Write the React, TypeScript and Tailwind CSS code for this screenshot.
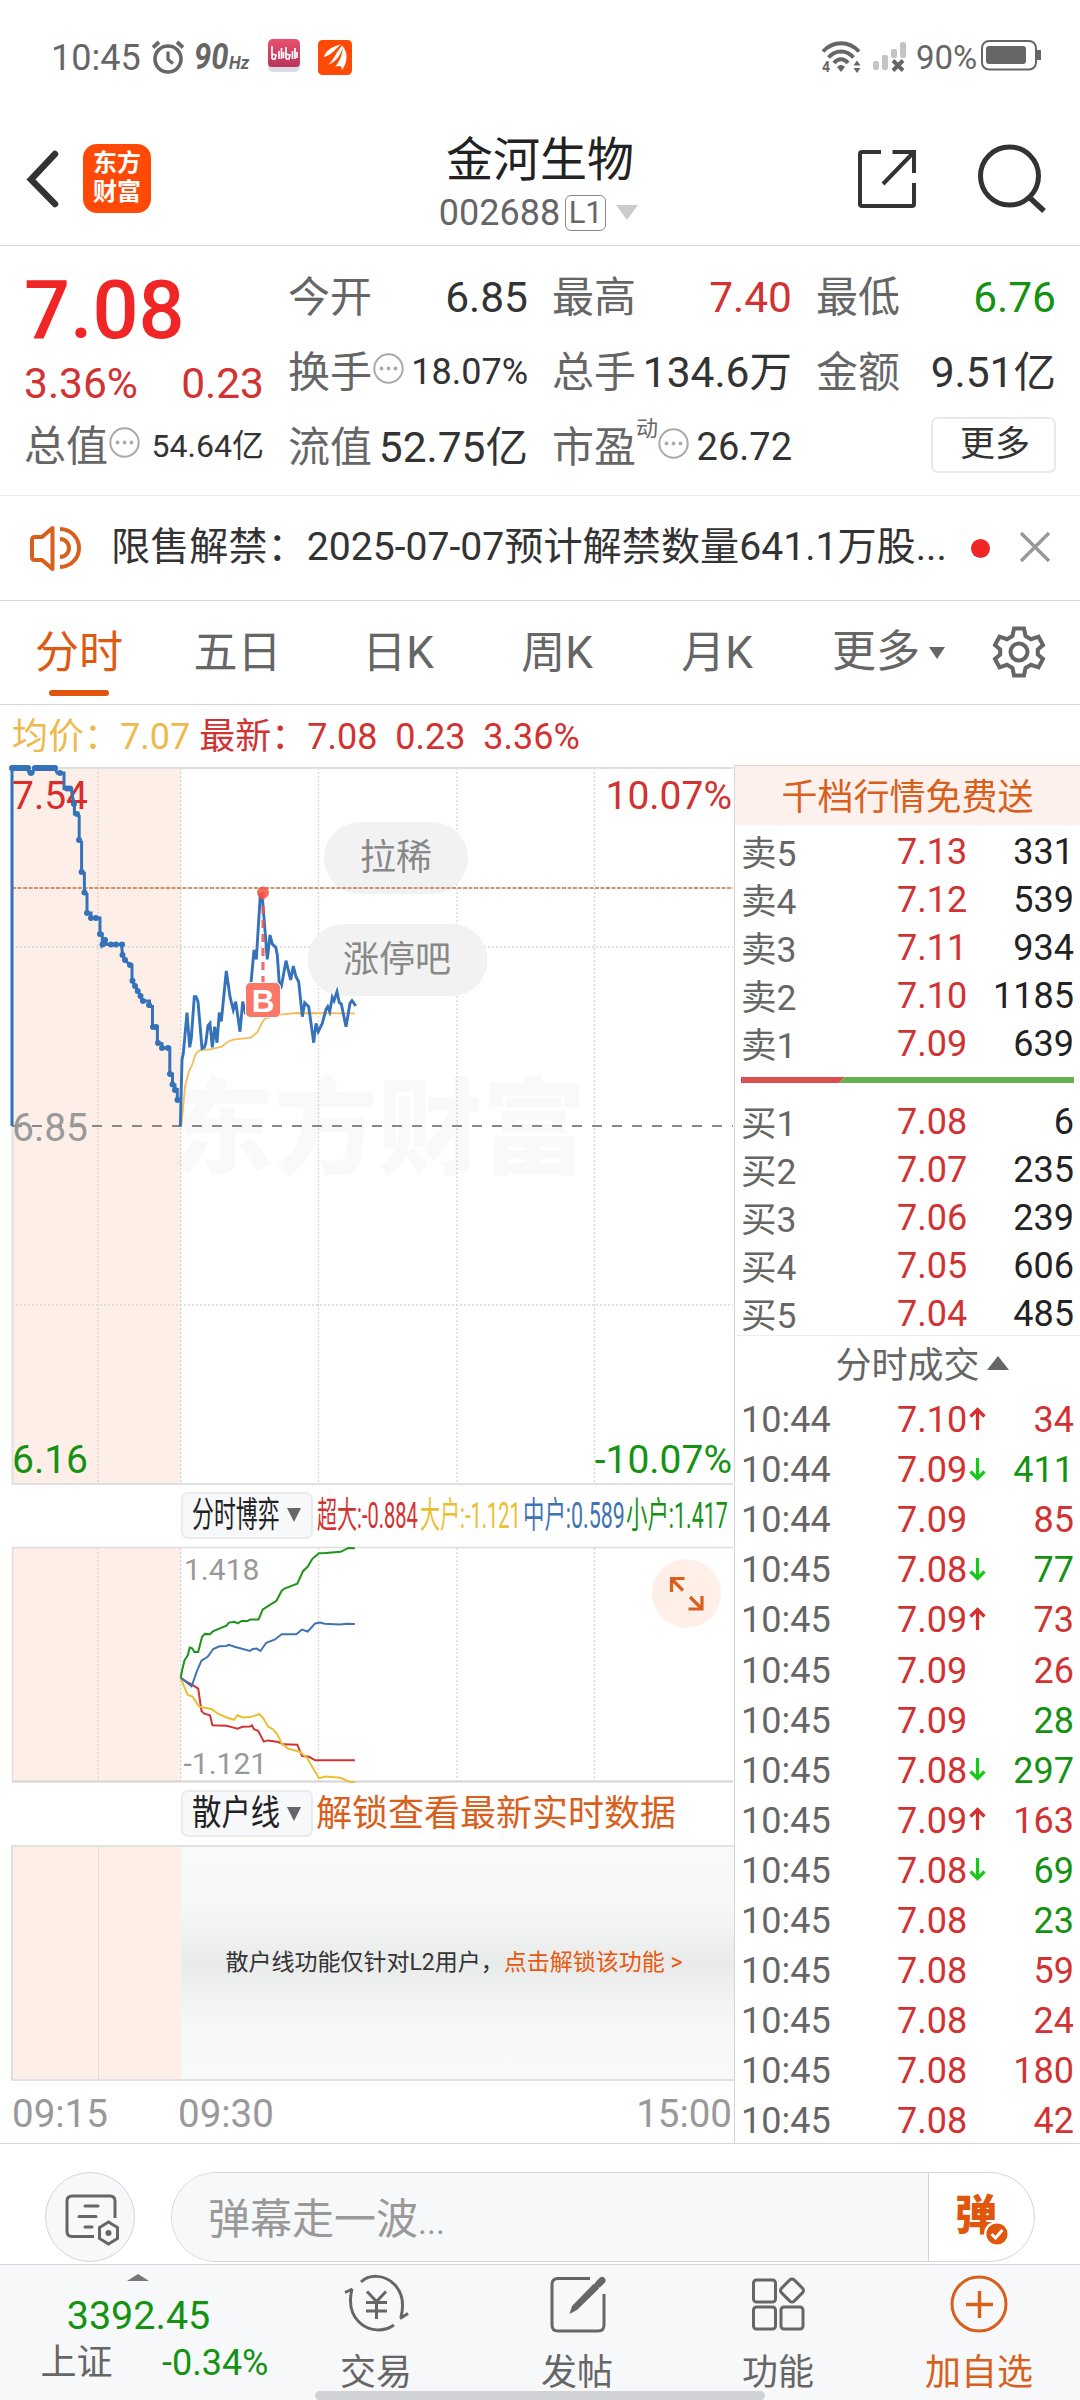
import type { ReactNode } from 'react';

type Pt = [number, number];

const toPoints = (pts: Pt[], sx: number, sy: number, ox: number, oy: number) =>
  pts.map(([x, y]) => `${(x * sx + ox).toFixed(1)},${(y * sy + oy).toFixed(1)}`).join(' ');

const PRE_OPEN: Pt[] = [
  [12, 1126], [12, 768], [27.5, 768], [29, 773], [33, 773], [34, 768], [55, 768], [57, 773], [64, 773], [64, 788.6],
  [71.6, 788.6], [72, 795], [74.4, 804], [74.4, 814], [76.8, 814], [79.2, 816], [79.2, 840], [81.6, 842], [81.6, 871.8],
  [84.4, 873], [84.4, 892.5], [87, 894], [87, 913], [91, 913], [91, 918], [100, 918], [100, 934], [102.3, 934],
  [102.3, 944.6], [105.4, 940], [106.7, 944.6], [121.5, 944.6], [122.6, 955], [125, 960], [130, 965], [132, 965],
  [132, 980.7], [135, 985.7], [137.7, 990.7], [140.5, 996], [142, 1001], [149.5, 1001], [149.5, 1006.4],
  [152.5, 1006.4], [152.5, 1027], [157.4, 1027], [157.4, 1043], [162, 1043.5], [162, 1048], [169.8, 1048],
  [169.8, 1074], [172.5, 1074], [172.5, 1084.6], [175, 1085], [175, 1089.6], [177.3, 1089.6], [177.3, 1100], [180, 1100],
];

const PRE_DOTS: Pt[] = [
  [31, 773], [60, 773], [67, 788.6], [70, 788.6], [74, 804], [77, 814], [79, 840], [81.6, 872], [84.4, 892.5], [87, 913], [91, 918],
  [96, 918], [100, 934], [102.5, 944.6], [105, 940], [111, 944.6], [116, 944.6], [122, 944.6], [122.5, 955], [125, 960], [130, 965],
  [132.5, 980.7], [135, 986], [137.7, 991], [140.5, 996], [143, 1001], [149, 1005], [153, 1027], [156, 1027], [158, 1043], [162, 1048],
  [168, 1048], [170, 1074], [172.5, 1084.6], [175, 1090], [177.5, 1100],
];

const PRICE: Pt[] = [
  [31, 800], [36, 600], [40, 580], [51, 458], [59, 562], [64, 535], [73, 410], [78, 410], [84, 425], [96, 565], [103, 562],
  [107, 550], [114, 497], [120, 490], [127, 562], [134, 500], [141, 548], [148, 458], [154, 484], [169, 333], [180, 410],
  [190, 450], [197, 425], [210, 515], [218, 425], [226, 458], [232, 455], [242, 380], [252, 270], [259, 298], [271, 105],
  [277, 110], [292, 298], [300, 225], [307, 252], [317, 262], [322, 285], [329, 388], [334, 380], [348, 302], [362, 360],
  [370, 318], [378, 350], [386, 365], [397, 470], [404, 428], [416, 440], [431, 548], [438, 490], [445, 515], [457, 490],
  [468, 448], [473, 440], [479, 455], [487, 412], [492, 422], [501, 395], [508, 428], [514, 432], [528, 500], [540, 430],
  [546, 422], [552, 430], [557, 438],
];

const AVERAGE: Pt[] = [
  [33, 800], [36, 780], [45, 680], [55, 640], [66, 615], [78, 580], [90, 571], [120, 568], [155, 560], [172, 546], [190, 539],
  [243, 533], [263, 515], [276, 488], [285, 476], [330, 464], [380, 459], [555, 460],
];

const SMALL: Pt[] = [
  [383, 380], [386, 360], [391, 335], [398, 322], [402, 302], [407, 304], [412, 314], [420, 314], [428, 275], [434, 267],
  [445, 268], [452, 260], [480, 246], [485, 238], [497, 236], [504, 240], [512, 234], [525, 234], [530, 230], [548, 230],
  [557, 204], [568, 196], [586, 182], [597, 156], [604, 150], [630, 138], [642, 106], [652, 94], [662, 74], [676, 60],
  [690, 59], [722, 56], [738, 46], [752, 47],
];
const MEDIUM: Pt[] = [
  [383, 380], [406, 402], [418, 360], [427, 336], [440, 326], [452, 306], [465, 299], [480, 298], [485, 295], [497, 300],
  [530, 311], [535, 306], [544, 305], [552, 311], [564, 290], [582, 282], [597, 268], [628, 268], [640, 256], [652, 261],
  [668, 240], [678, 238], [688, 241], [720, 243], [735, 241], [752, 242],
];
const HUGE: Pt[] = [
  [383, 380], [395, 390], [408, 398], [420, 408], [427, 465], [433, 472], [445, 476], [450, 502], [480, 503], [495, 508],
  [503, 511], [514, 506], [530, 505], [534, 502], [538, 512], [547, 516], [559, 544], [568, 541], [590, 545], [600, 551],
  [630, 552], [640, 581], [655, 583], [668, 592], [752, 592],
];
const LARGE: Pt[] = [
  [383, 380], [390, 402], [398, 424], [408, 428], [422, 454], [448, 460], [462, 472], [480, 482], [496, 488], [503, 476],
  [515, 482], [530, 481], [540, 477], [550, 473], [558, 484], [568, 505], [578, 512], [588, 526], [597, 549], [610, 562],
  [635, 570], [650, 585], [676, 638], [690, 634], [722, 637], [740, 647], [752, 648],
];

const SELLS = [['卖5', '7.13', '331'], ['卖4', '7.12', '539'], ['卖3', '7.11', '934'], ['卖2', '7.10', '1185'], ['卖1', '7.09', '639']];
const BUYS = [['买1', '7.08', '6'], ['买2', '7.07', '235'], ['买3', '7.06', '239'], ['买4', '7.05', '606'], ['买5', '7.04', '485']];

type Tick = { t: string; p: string; dir: '' | 'up' | 'down'; v: string; buy: boolean };
const TICKS: Tick[] = [
  { t: '10:44', p: '7.10', dir: 'up', v: '34', buy: true },
  { t: '10:44', p: '7.09', dir: 'down', v: '411', buy: false },
  { t: '10:44', p: '7.09', dir: '', v: '85', buy: true },
  { t: '10:45', p: '7.08', dir: 'down', v: '77', buy: false },
  { t: '10:45', p: '7.09', dir: 'up', v: '73', buy: true },
  { t: '10:45', p: '7.09', dir: '', v: '26', buy: true },
  { t: '10:45', p: '7.09', dir: '', v: '28', buy: false },
  { t: '10:45', p: '7.08', dir: 'down', v: '297', buy: false },
  { t: '10:45', p: '7.09', dir: 'up', v: '163', buy: true },
  { t: '10:45', p: '7.08', dir: 'down', v: '69', buy: false },
  { t: '10:45', p: '7.08', dir: '', v: '23', buy: false },
  { t: '10:45', p: '7.08', dir: '', v: '59', buy: true },
  { t: '10:45', p: '7.08', dir: '', v: '24', buy: true },
  { t: '10:45', p: '7.08', dir: '', v: '180', buy: true },
  { t: '10:45', p: '7.08', dir: '', v: '42', buy: true },
];

function StatusBar() {
  return (
    <div className="flex h-[114px] items-center pl-[51px] text-[#666]">
      <span className="w-[100px] pt-px text-[36px] leading-none">10:45</span>
      <svg className="h-[34px] w-[34px]" viewBox="0 0 34 34" fill="none" stroke="#666">
        <circle cx="17" cy="19" r="13" strokeWidth="3.6" />
        <path d="M17 11.5v8l5 4" strokeWidth="3.2" />
        <path d="M2 7.5l6-5.5M32 7.5l-6-5.5" strokeWidth="3.8" />
      </svg>
      <span className="ml-[9px] w-[74px] whitespace-nowrap font-bold italic leading-none">
        <span className="inline-block w-[35px] origin-left scale-x-[0.86] text-[36px]">90</span>
        <span className="inline-block origin-left scale-x-90 text-[19px]">Hz</span>
      </span>
      <div className="mt-[-3px] flex h-[33px] w-[32px] flex-col overflow-hidden rounded-[5px] bg-[#d9dbe8]">
        <div className="flex h-[28px] items-center justify-center rounded-b-[4px] bg-gradient-to-b from-[#ea5070] to-[#b8345a]">
          <svg className="h-4 w-7" viewBox="0 0 28 16" fill="none" stroke="#fff" strokeWidth="1.7">
            <path d="M2 1v13M2 9l4 1-1 4-3 0M9 6v8M11.500 3v11M13.500 7v6M16 2v12M16 9l4 1-1 4-3 0M22.500 6v8M25 3v11M27 7v6" />
          </svg>
        </div>
      </div>
      <svg className="ml-[18px] h-[35px] w-[34px]" viewBox="0 0 34 35">
        <rect width="34" height="35" rx="4.500" fill="#fe4a06" />
        <path d="M6 17C7 11 15 6 23 4.500C17 9 14 15 6 17zM10 25C16 20 18 12 24.500 5C25 13 18 22 10 25zM17 27C22 21 25 14 24.500 6C30 12 30 22 24 30C24 26 22 25 17 27z" fill="#fff" />
      </svg>
      <svg className="ml-[468px] h-[36px] w-[42px]" viewBox="0 0 42 36">
        <g fill="none" stroke="#666" strokeWidth="4">
          <path d="M3 12.500C13 1.500 29 1.500 39 12.500" />
          <path d="M8.500 18.500C15.500 10.500 26.500 10.500 33.500 18.500" />
          <path d="M14 24C18 19 24 19 28 24" />
        </g>
        <path d="M17 28q4-4 8 0l-4 5z" fill="#666" />
        <path d="M33.500 26.500h7l-3.500-5zM33.500 29h7l-3.500 5z" fill="#666" />
        <text x="2" y="32.500" fontSize="14" fontWeight="700" fill="#666" fontFamily="Roboto">4</text>
      </svg>
      <svg className="ml-[10px] h-[32px] w-[34px]" viewBox="0 0 34 32">
        <g fill="#c4c4c4">
          <rect x="1" y="20" width="6" height="9" rx="2" />
          <rect x="10" y="14" width="6" height="15" rx="2" />
          <rect x="19" y="8" width="6" height="9" rx="2" />
          <rect x="28" y="1" width="6" height="16" rx="2" />
        </g>
        <path d="M21 19.500l10 10M31 19.500l-10 10" stroke="#666" strokeWidth="4" />
      </svg>
      <span className="ml-[10px] w-[64px] whitespace-nowrap text-[33px] leading-none">90%</span>
      <svg className="ml-px mt-[-3px] h-[31px] w-[60px]" viewBox="0 0 60 31">
        <rect x="1" y="1" width="54" height="28.500" rx="7" fill="none" stroke="#666" strokeWidth="2" />
        <rect x="5" y="6" width="40" height="18" rx="3" fill="#666" />
        <path d="M56 10h4v10h-4z" fill="#666" />
      </svg>
    </div>
  );
}

function Header() {
  return (
    <div className="flex h-[132px] items-center border-b border-[#d4d5d9]">
      <svg className="ml-[26px] mt-[-2px] h-[58px] w-[34px]" viewBox="0 0 34 58">
        <path d="M29 4L5 29.500L29 54" fill="none" stroke="#333" strokeWidth="6.500" strokeLinecap="round" />
      </svg>
      <div className="ml-[23px] mt-[-3px] flex h-[69px] w-[68px] flex-col items-center justify-center rounded-[14px] bg-[#fe4a06] text-[24px] font-bold leading-[29px] text-white">
        <span>东方</span>
        <span>财富</span>
      </div>
      <div className="ml-[265px] mt-[10px] flex w-[248px] flex-col items-center">
        <div className="text-[47px] leading-[56px] text-[#222]">金河生物</div>
        <div className="ml-[-3px] flex h-[50px] items-center">
          <span className="text-[36px] leading-none text-[#666]">002688</span>
          <span className="ml-[5px] flex h-[36px] w-[41px] items-center justify-center rounded-[6px] border border-[#888] text-[31px] leading-none text-[#666]">L1</span>
          <span className="ml-[10px] h-0 w-0 border-x-[11px] border-t-[15px] border-x-transparent border-t-[#ccc]" />
        </div>
      </div>
      <svg className="ml-[192px] mt-[-4px] h-[60px] w-[60px]" viewBox="0 0 60 60" fill="none" stroke="#333" strokeWidth="4">
        <path d="M25 4H6Q4 4 4 6V56Q4 58 6 58H56Q58 58 58 56V35" />
        <path d="M36.500 4H58V25M57 5L27 36" />
      </svg>
      <svg className="ml-[59px] mt-[-4px] h-[72px] w-[72px]" viewBox="0 0 72 72" fill="none" stroke="#333">
        <circle cx="34.500" cy="34" r="29" strokeWidth="5" />
        <path d="M54 55L69 69" strokeWidth="5.500" />
      </svg>
    </div>
  );
}

function InfoDots() {
  return (
    <svg className="h-[31px] w-[31px] shrink-0" viewBox="0 0 31 31">
      <circle cx="15.500" cy="15.500" r="14.200" fill="none" stroke="#aaa" strokeWidth="2" />
      <g fill="#aaa">
        <circle cx="8.500" cy="15.500" r="1.900" />
        <circle cx="15.500" cy="15.500" r="1.900" />
        <circle cx="22.500" cy="15.500" r="1.900" />
      </g>
    </svg>
  );
}

function Stat({ label, value, valueClass, extra }: { label: string; value: string; valueClass: string; extra?: ReactNode }) {
  return (
    <div className="flex h-[75px] items-center whitespace-nowrap text-[42px] leading-[75px] text-[#666]">
      <span>{label}</span>
      {extra}
      <span className={`ml-auto ${valueClass}`}>{value}</span>
    </div>
  );
}

function Quote() {
  return (
    <div className="grid h-[250px] grid-cols-4 gap-6 border-b border-[#ececec] px-6 pt-[14px]">
      <div>
        <div className="h-[98px] pt-px text-[81px] font-medium leading-[99px] text-[#f02626]">7.08</div>
        <div className="flex h-[51px] items-center justify-between text-[42.5px] leading-[51px] text-[#d13232]">
          <span>3.36%</span>
          <span>0.23</span>
        </div>
        <Stat label="总值" value="54.64亿" valueClass="text-[32px] text-[#333]" extra={<span className="mb-2 ml-px"><InfoDots /></span>} />
      </div>
      <div>
        <Stat label="今开" value="6.85" valueClass="text-[#333] text-[42.5px]" />
        <Stat label="换手" value="18.07%" valueClass="text-[36px] text-[#333]" extra={<span className="mb-2 ml-px"><InfoDots /></span>} />
        <Stat label="流值" value="52.75亿" valueClass="text-[#333] text-[42.5px]" />
      </div>
      <div>
        <Stat label="最高" value="7.40" valueClass="text-[#d13232] text-[42.5px]" />
        <Stat label="总手" value="134.6万" valueClass="text-[#333] text-[42.5px]" />
        <Stat
          label="市盈"
          value="26.72"
          valueClass="text-[38px] text-[#333]"
          extra={
            <>
              <span className="mb-[38px] text-[22px] leading-none">动</span>
              <span className="mb-2"><InfoDots /></span>
            </>
          }
        />
      </div>
      <div>
        <Stat label="最低" value="6.76" valueClass="text-[#159212] text-[42.5px]" />
        <Stat label="金额" value="9.51亿" valueClass="text-[#333] text-[42.5px]" />
        <div className="ml-auto mt-[7px] flex h-[56px] w-[125px] items-center justify-center rounded-[7px] border-2 border-[#e9e9e9] pb-px pl-[3px] text-[35px] leading-none text-[#333]">更多</div>
      </div>
    </div>
  );
}

function Notice() {
  return (
    <div className="flex h-[105px] items-center border-b border-[#d4d5d9]">
      <svg className="ml-[28px] h-[48px] w-[54px]" viewBox="0 0 54 48" fill="none" stroke="#d8601c" strokeWidth="4">
        <path d="M24.500 4V45L14 36H7Q4 36 4 33V16Q4 13 7 13H14Z" strokeLinejoin="round" />
        <path d="M32 5A19 19 0 0 1 32 43M32 15A9 9 0 0 1 32 33" />
      </svg>
      <span className="ml-[29px] w-[850px] whitespace-nowrap text-[39.15px] leading-none text-[#333]">限售解禁：2025-07-07预计解禁数量641.1万股...</span>
      <span className="ml-[10px] h-[19px] w-[19px] rounded-full bg-[#f02626]" />
      <svg className="ml-[29px] mt-[-2px] h-[32px] w-[32px]" viewBox="0 0 32 32">
        <path d="M2 2L30 30M30 2L2 30" stroke="#999" strokeWidth="3.500" />
      </svg>
    </div>
  );
}

function Tabs() {
  return (
    <div className="flex h-[104px] border-b border-[#d4d5d9] text-[44px] leading-[105px] text-[#666]">
      <div className="flex w-[158px] flex-col items-center text-[#dd5a12]">
        <span className="h-[89px]">分时</span>
        <span className="h-[6px] w-[60px] rounded-full bg-[#e0560c]" />
      </div>
      <div className="w-[159px] text-center">五日</div>
      <div className="w-[162px] text-center">日K</div>
      <div className="w-[156px] text-center">周K</div>
      <div className="w-[164px] text-center">月K</div>
      <div className="ml-[33px] flex items-center">
        <span>更多</span>
        <span className="ml-[9px] h-0 w-0 border-x-[8px] border-t-[12px] border-x-transparent border-t-[#666]" />
      </div>
      <svg className="ml-[47px] mt-[24px] h-[54px] w-[54px]" viewBox="0 0 54 54" fill="none" stroke="#666" strokeWidth="4" strokeLinejoin="miter">
        <path d="M22 3.500H32L33.500 11L39 14.200L46.500 11.700L51 20L45.800 24.500V29.500L51 34L46.500 42.300L39 39.800L33.500 43L32 50.500H22L20.500 43L15 39.800L7.500 42.300L3 34L8.200 29.500V24.500L3 20L7.500 11.700L15 14.200L20.500 11Z" />
        <circle cx="27" cy="27" r="8.500" />
      </svg>
    </div>
  );
}

const GRID_X = [98, 318.5, 457, 594.5];

function PriceChart() {
  return (
    <svg className="block h-[722px] w-[734px]" viewBox="0 765 734 722" fontFamily="Roboto, 'Noto Sans CJK SC', sans-serif">
      <rect x="12" y="768" width="169" height="716" fill="#fdeee8" />
      <g stroke="#d6d6d6" strokeWidth="1.300" strokeDasharray="2 2">
        {GRID_X.map((x) => <line key={x} x1={x} x2={x} y1="768" y2="1484" />)}
        <line x1="180.700" x2="180.700" y1="768" y2="1484" />
        <line x1="12" x2="733" y1="947" y2="947" />
        <line x1="12" x2="733" y1="1305" y2="1305" />
      </g>
      <path d="M12 768H733M12 1484H733M12.500 768V1484" stroke="#e0e0e0" strokeWidth="2" fill="none" />
      <text x="170" y="1166" fontSize="104" fontWeight="900" fill="#000" fillOpacity="0.025">东方财富</text>
      <rect x="324" y="822" width="144" height="72" rx="36" fill="#f2f2f2" />
      <rect x="307.500" y="924" width="180" height="72" rx="36" fill="#f2f2f2" />
      <line x1="12" x2="733" y1="888" y2="888" stroke="#c4703f" strokeWidth="1.300" strokeDasharray="4 1.500" />
      <line x1="12" x2="733" y1="1126" y2="1126" stroke="#888" strokeWidth="2" strokeDasharray="10 10" />
      <text x="396" y="869.500" fontSize="36" fill="#888" textAnchor="middle">拉稀</text>
      <text x="397" y="972" fontSize="36" fill="#888" textAnchor="middle">涨停吧</text>
      <polyline points={toPoints(AVERAGE, 1 / 3, 1 / 3, 170, 860)} fill="none" stroke="#f3bc55" strokeWidth="1.800" />
      <g fontSize="39">
        <text x="12" y="809" fill="#d92c2c">7.54</text>
        <text x="732" y="809" fill="#d13232" textAnchor="end">10.07%</text>
        <text x="12" y="1141" fill="#999">6.85</text>
        <text x="12" y="1473" fill="#159212">6.16</text>
        <text x="732" y="1473" fill="#159212" textAnchor="end">-10.07%</text>
      </g>
      <polyline points={toPoints(PRE_OPEN, 1, 1, 0, 0)} fill="none" stroke="#3472b9" strokeWidth="3" />
      <path d="M12 768H28M35 768H55" stroke="#3472b9" strokeWidth="6" strokeLinecap="round" />
      {PRE_DOTS.map(([x, y]) => <circle key={`${x}-${y}`} cx={x} cy={y} r="3" fill="#3472b9" />)}
      <polyline points={toPoints(PRICE, 1 / 3, 1 / 3, 170, 860)} fill="none" stroke="#3472b9" strokeWidth="2.900" />
      <line x1="263" x2="263" y1="892" y2="984" stroke="#f0564d" strokeOpacity="0.850" strokeWidth="3.200" strokeDasharray="8 6" />
      <circle cx="263" cy="892.500" r="6" fill="#f4503f" fillOpacity="0.850" />
      <rect x="245.500" y="982.500" width="35" height="35" rx="5" fill="#fb7767" stroke="#fff" />
      <text x="263" y="1011.500" fontSize="31.500" fontWeight="700" fill="#fff" textAnchor="middle" fontFamily="Liberation Sans">B</text>
    </svg>
  );
}

function SelectChip({ label, scaleClass }: { label: string; scaleClass: string }) {
  return (
    <div className="ml-[181px] flex h-[47px] w-[132px] items-center rounded-[7px] border-2 border-[#e9ebee] bg-[#f7f8fa] pl-[9px]">
      <div className={`${scaleClass} w-[95px] origin-left whitespace-nowrap text-[35px] leading-none text-[#222]`}>{label}</div>
      <span className="h-0 w-0 border-x-[7.500px] border-t-[14px] border-x-transparent border-t-[#666]" />
    </div>
  );
}

function FlowChart() {
  const line = (pts: Pt[]) => toPoints(pts, 0.4719, 0.389, 0, 1530);
  return (
    <svg className="block h-[242px] w-[734px]" viewBox="0 1543 734 242" fontFamily="Roboto, sans-serif">
      <rect x="12" y="1547.500" width="169" height="234" fill="#fdeee8" />
      <g stroke="#d6d6d6" strokeWidth="1.300" strokeDasharray="2 2">
        {GRID_X.map((x) => <line key={x} x1={x} x2={x} y1="1548" y2="1781" />)}
        <line x1="180.700" x2="180.700" y1="1548" y2="1781" />
      </g>
      <path d="M12 1547.500H733M12.500 1547.500V1781" stroke="#ddd" strokeWidth="1.500" fill="none" />
      <path d="M12 1781.500H733" stroke="#d4d4d4" strokeWidth="2" />
      <text x="184" y="1580" fontSize="30" fill="#999">1.418</text>
      <text x="183.500" y="1774" fontSize="30" fill="#999">-1.121</text>
      <g fill="none" strokeWidth="2">
        <polyline points={line(HUGE)} stroke="#d03333" />
        <polyline points={line(LARGE)} stroke="#e9c02f" />
        <polyline points={line(MEDIUM)} stroke="#3f74b3" />
        <polyline points={line(SMALL)} stroke="#1c941a" />
      </g>
      <circle cx="686.500" cy="1593.500" r="34.500" fill="#fef0e9" />
      <path d="M671.500 1592V1578.500H684.500M672 1579.500L683 1590.500M690 1597L701.500 1608.500M702 1596V1609H688.500" stroke="#d8601c" strokeWidth="3.200" fill="none" />
    </svg>
  );
}

const FLOWS = [
  { text: '超大:-0.884', cls: 'w-[103px] text-[#d13232]', scale: 'scale-x-[0.557]' },
  { text: '大户:-1.121', cls: 'w-[103px] text-[#e9c02f]', scale: 'scale-x-[0.557]' },
  { text: '中户:0.589', cls: 'w-[103px] text-[#3f74b3]', scale: 'scale-x-[0.595]' },
  { text: '小户:1.417', cls: 'w-[104px] text-[#159212]', scale: 'scale-x-[0.595]' },
];

function LeftColumn() {
  return (
    <div className="w-[734px] shrink-0">
      <PriceChart />
      <div className="flex h-[56px] items-center">
        <SelectChip label="分时博弈" scaleClass="scale-x-[0.625]" />
        <div className="ml-[4px] flex pt-px">
          {FLOWS.map((f) => (
            <div key={f.text} className={`${f.cls} whitespace-nowrap text-[36px] leading-none`}>
              <div className={`${f.scale} origin-left`}>{f.text}</div>
            </div>
          ))}
        </div>
      </div>
      <FlowChart />
      <div className="flex h-[57px] items-center">
        <SelectChip label="散户线" scaleClass="scale-x-[0.84]" />
        <span className="ml-[3px] text-[36px] leading-none text-[#d8601c]">解锁查看最新实时数据</span>
      </div>
      <div className="ml-[11px] mt-[3px] flex h-[236px] w-[723px] border-y-2 border-[#e2e2e2]">
        <div className="flex w-[170px] border-l-2 border-[#ddd] bg-[#fdeee8]">
          <div className="w-[86px] border-r border-dotted border-[#d2cbc8]" />
        </div>
        <div className="flex flex-1 items-center justify-center whitespace-nowrap bg-[linear-gradient(180deg,#f8f9f9_0%,#f6f7f7_25%,#f0f1f1_38%,#e9eaea_50%,#f0f1f1_62%,#f6f7f7_76%,#f8f9f9_100%)] pb-[2px] pr-[7px] text-[23px] leading-none">
          <span className="text-[#333]">散户线功能仅针对L2用户，</span>
          <span className="text-[#e8590f]">点击解锁该功能 &gt;</span>
        </div>
      </div>
      <div className="flex h-[62px] items-center pl-[12px] pt-[4px] text-[38.500px] leading-none text-[#999]">
        <span className="w-[166px]">09:15</span>
        <span>09:30</span>
        <span className="ml-auto mr-[2px]">15:00</span>
      </div>
    </div>
  );
}

function Level({ row }: { row: string[] }) {
  return (
    <div className="flex h-[48px] items-center pl-[6px] pr-[6px] text-[36px] leading-none">
      <span className="mt-[6px] w-[156px] text-[35.500px] text-[#666]">{row[0]}</span>
      <span className="text-[#d13232]">{row[1]}</span>
      <span className="ml-auto text-[#222]">{row[2]}</span>
    </div>
  );
}

function RightColumn() {
  return (
    <div className="h-[1378px] flex-1 overflow-hidden border-l border-t border-[#d4d5d9]">
      <div className="h-[59px] bg-[#fcf1ec] pt-[3px] text-center text-[36px] leading-[59px] text-[#d8601c]">千档行情免费送</div>
      <div className="mt-[3px]">{SELLS.map((r) => <Level key={r[0]} row={r} />)}</div>
      <svg className="ml-[6px] mt-[9px] block h-[6px] w-[333px]" viewBox="0 0 333 6">
        <path d="M0 0H104L98 6H0Z" fill="#d9504e" />
        <path d="M104 0H333V6H98Z" fill="#62b350" />
      </svg>
      <div className="mt-[15px]">{BUYS.map((r) => <Level key={r[0]} row={r} />)}</div>
      <div className="mt-[-3px] flex h-[60px] items-center justify-center border-t border-[#ececec] pl-[29px] text-[36px] leading-none text-[#666]">
        <span>分时成交</span>
        <span className="mb-[6px] ml-[7px] h-0 w-0 border-x-[11px] border-b-[14px] border-x-transparent border-b-[#666]" />
      </div>
      {TICKS.map((k, i) => (
        <div key={i} className="flex h-[50.1px] items-center pl-[6px] pr-[6px] text-[36px] leading-none">
          <span className="w-[156px] text-[#666]">{k.t}</span>
          <span className="text-[#d13232]">{k.p}</span>
          {k.dir !== '' && (
            <svg className="mb-[3px] ml-[2px] h-[24px] w-[17px]" viewBox="0 0 17 24" fill="none" strokeWidth="3.200">
              {k.dir === 'up'
                ? <path d="M8.500 23V3M1.500 9.500L8.500 2.500L15.500 9.500" stroke="#d92c2c" />
                : <path d="M8.500 1V21M1.500 14.500L8.500 21.500L15.500 14.500" stroke="#18c818" />}
            </svg>
          )}
          <span className={k.buy ? 'ml-auto text-[#d13232]' : 'ml-auto text-[#159212]'}>{k.v}</span>
        </div>
      ))}
    </div>
  );
}

function DanmuBar() {
  return (
    <div className="flex h-[121px] items-start border-t border-[#d4d5d9] pt-[28px]">
      <div className="ml-[45px] flex h-[90px] w-[90px] items-center justify-center rounded-full border border-[#d4d5d9] bg-[#f7f8fa]">
        <svg className="ml-[3px] mt-[4px] h-[54px] w-[56px]" viewBox="0 0 56 54" fill="none" stroke="#666" strokeWidth="3">
          <path d="M30 44.500H8Q3 44.500 3 39.500V9Q3 4 8 4H46Q51 4 51 9V26" />
          <path d="M21 14H34M15 24.500H32M21 35H28" strokeLinecap="round" />
          <path d="M44.500 30L53.500 35.500V46.500L44.500 52L35.500 46.500V35.500Z" />
          <circle cx="44.500" cy="41" r="3" fill="#666" stroke="none" />
        </svg>
      </div>
      <div className="ml-[36px] flex h-[90px] w-[864px] overflow-hidden rounded-full border border-[#d4d5d9]">
        <div className="w-[757px] border-r border-[#d4d5d9] bg-[#f7f8fa] pl-[36px] pt-[3px] text-[42px] leading-[88px] text-[#999]">
          弹幕走一波<span className="text-[34px]">...</span>
        </div>
        <div className="relative flex-1 pl-[26px] pt-[20px] text-[42px] font-black leading-[46px] text-[#e0560c]">
          弹
          <svg className="absolute left-[55px] top-[48px] h-[26px] w-[26px]" viewBox="0 0 26 26">
            <circle cx="13" cy="13" r="11.800" fill="#e0560c" stroke="#fff" strokeWidth="2.400" />
            <path d="M7.500 13L11.500 17L18.500 9" fill="none" stroke="#fff" strokeWidth="3" />
          </svg>
        </div>
      </div>
    </div>
  );
}

function NavItem({ label, orange, children }: { label: string; orange?: boolean; children: ReactNode }) {
  return (
    <div className={orange ? 'flex w-[201px] flex-col items-center text-[#d8601c]' : 'flex w-[201px] flex-col items-center text-[#666]'}>
      <svg className="mt-[6px] h-[66px] w-[66px]" viewBox="0 0 66 66" fill="none" stroke="currentColor" strokeWidth="3">{children}</svg>
      <span className="ml-px mt-[18px] text-[36px] leading-[36px]">{label}</span>
    </div>
  );
}

function BottomNav() {
  return (
    <div className="relative flex h-[136px] overflow-hidden border-t border-[#d4d5d9] bg-[#f7f8fa]">
      <div className="flex w-[275px] flex-col items-center leading-none">
        <span className="mt-[9px] h-0 w-0 border-x-[11px] border-b-[7px] border-x-transparent border-b-[#777]" />
        <span className="ml-[2px] mt-[15px] text-[39.500px] leading-[40px] text-[#159212]">3392.45</span>
        <div className="ml-[34px] mt-[9px] flex h-[36px] w-[228px] items-center justify-between text-[36px] leading-none text-[#666]">
          <span>上证</span>
          <span className="text-[36px] text-[#159212]">-0.34%</span>
        </div>
      </div>
      <div className="flex">
        <NavItem label="交易">
          <path d="M17 11C24 4 40 2 51 14C61 25 59 38 57 46M56 47.500L64 42.500M50 54C40 61 25 61 15 51C6 42 5 30 8 18M8.500 18L1 21.500" transform="translate(1 0)" />
          <path d="M24 20.500L33.500 30.500L43 20.500M33.500 30V48M23 31.500H44M23 40H44" />
        </NavItem>
        <NavItem label="发帖">
          <path d="M46 7.500H14Q8 7.500 8 13.500V54Q8 60 14 60H54Q60 60 60 54V23" />
          <path d="M25.500 43L28 35L50 12.500L55 17.500L33 39Z" fill="currentColor" stroke="none" />
          <path d="M54.500 13L58 9.500" strokeWidth="7" strokeLinecap="round" />
        </NavItem>
        <NavItem label="功能">
          <rect x="8.500" y="9" width="22" height="22" rx="3" />
          <rect x="8.500" y="36" width="22" height="22" rx="3" />
          <rect x="36" y="36" width="22" height="22" rx="3" />
          <rect x="38" y="10.500" width="18" height="18" rx="3" transform="rotate(45 47 19.500)" />
        </NavItem>
        <NavItem label="加自选" orange>
          <circle cx="33" cy="33" r="27" />
          <path d="M33.500 20V47M20 33.500H47" strokeWidth="3.500" />
        </NavItem>
      </div>
      <div className="absolute bottom-0 left-[315px] h-[9px] w-[450px] rounded-[5px] bg-[#d0d2d6]" />
    </div>
  );
}

export default function App() {
  return (
    <div className="flex h-[2400px] w-[1080px] flex-col overflow-hidden bg-white font-['Roboto','Noto_Sans_CJK_SC',sans-serif]">
      <StatusBar />
      <Header />
      <Quote />
      <Notice />
      <Tabs />
      <div className="flex h-[60px] items-center gap-[9px] whitespace-pre pl-[12px] pt-[3px] text-[36px] leading-none">
        <span className="text-[#f0b94e]">均价：7.07</span>
        <span className="text-[#d13232]">最新：7.08  0.23  3.36%</span>
      </div>
      <div className="flex h-[1378px]">
        <LeftColumn />
        <RightColumn />
      </div>
      <DanmuBar />
      <BottomNav />
    </div>
  );
}
